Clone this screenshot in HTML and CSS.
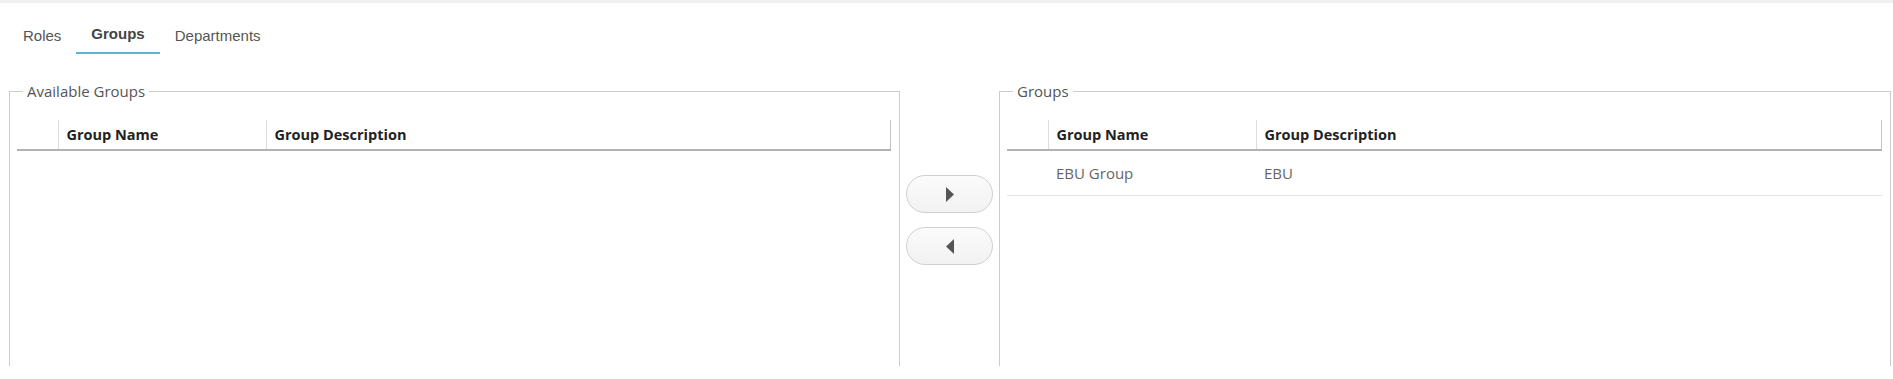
FILE: index.html
```html
<!DOCTYPE html>
<html lang="en">
  <head>
    <meta charset="UTF-8" />
    <title>Groups</title>
    <link rel="stylesheet" href="styles.css">
  </head>
  <body>
    <div class="top-bar"></div>

    <div class="tabs">
      <div class="tab">Roles</div>
      <div class="tab active">Groups</div>
      <div class="tab">Departments</div>
    </div>

    <div class="viewport">
      <div class="picker">
        <fieldset class="panel">
          <legend>Available Groups</legend>
          <table class="grid">
            <thead>
              <tr>
                <th class="check-col"></th>
                <th class="name-col">Group Name</th>
                <th>Group Description</th>
              </tr>
            </thead>
            <tbody></tbody>
          </table>
        </fieldset>

        <div class="mover">
          <button class="move-btn" title="Add">
            <svg width="8" height="15" viewBox="0 0 8 15"><path d="M0 0 L8 7.5 L0 15 Z" fill="#555"/></svg>
          </button>
          <button class="move-btn" title="Remove">
            <svg width="8" height="15" viewBox="0 0 8 15"><path d="M8 0 L0 7.5 L8 15 Z" fill="#555"/></svg>
          </button>
        </div>

        <fieldset class="panel">
          <legend>Groups</legend>
          <table class="grid">
            <thead>
              <tr>
                <th class="check-col"></th>
                <th class="name-col">Group Name</th>
                <th>Group Description</th>
              </tr>
            </thead>
            <tbody>
              <tr>
                <td></td>
                <td>EBU Group</td>
                <td>EBU</td>
              </tr>
            </tbody>
          </table>
        </fieldset>
      </div>
    </div>
  </body>
</html>
```

FILE: styles.css
```css
* {
  box-sizing: border-box;
}

body {
  margin: 0;
  background: #fff;
  color: #555;
  font-family: "Open Sans", sans-serif;
  font-size: 14px;
}

.top-bar {
  height: 3px;
  background: #f0f0f0;
}

.tabs {
  display: flex;
  align-items: flex-start;
  padding-left: 8px;
  margin-top: 22px;
  font-family: "Liberation Sans", Arial, sans-serif;
  font-size: 15px;
  line-height: 17px;
}

.tab {
  padding: 2px 15px 8px;
  border-bottom: 2px solid transparent;
  color: #555;
  cursor: pointer;
}

.tab.active {
  padding-top: 0;
  padding-bottom: 10px;
  font-weight: bold;
  color: #444;
  border-bottom-color: #5ab4dc;
}

.viewport {
  height: 312px;
  overflow: hidden;
}

.picker {
  display: grid;
  grid-template-columns: 891px 99px 892px;
  padding-left: 9px;
  margin-top: 28px;
}

.panel {
  margin: 0;
  min-width: 0;
  height: 400px;
  padding: 19px 8px 0 7px;
  border: 1px solid #ccc;
}

.panel legend {
  margin-left: 6px;
  padding: 0 4px;
  font-size: 15px;
  line-height: 19px;
  color: #555;
}

.grid {
  width: 100%;
  border-collapse: collapse;
}

.grid th {
  height: 30px;
  padding: 0 8px;
  text-align: left;
  font-size: 14.5px;
  font-weight: bold;
  color: #222;
  border-left: 1px solid #ddd;
  border-bottom: 2px solid #b3b3b3;
}

.grid th:first-child {
  border-left: none;
}

.grid th:last-child {
  border-right: 1px solid #c4c4c4;
}

.grid .check-col {
  width: 41px;
}

.grid .name-col {
  width: 208px;
}

.grid td {
  height: 45px;
  padding: 0 8px;
  font-size: 15px;
  color: #666;
  border-bottom: 1px solid #e2e2e2;
}

.mover {
  display: flex;
  flex-direction: column;
  align-items: center;
  gap: 14px;
  padding-top: 93px;
}

.move-btn {
  display: flex;
  align-items: center;
  justify-content: center;
  width: 87px;
  height: 38px;
  padding: 0;
  border: 1px solid #d0d0d0;
  border-radius: 19px;
  background: linear-gradient(#fbfbfb, #f2f2f2);
  cursor: pointer;
}
```
